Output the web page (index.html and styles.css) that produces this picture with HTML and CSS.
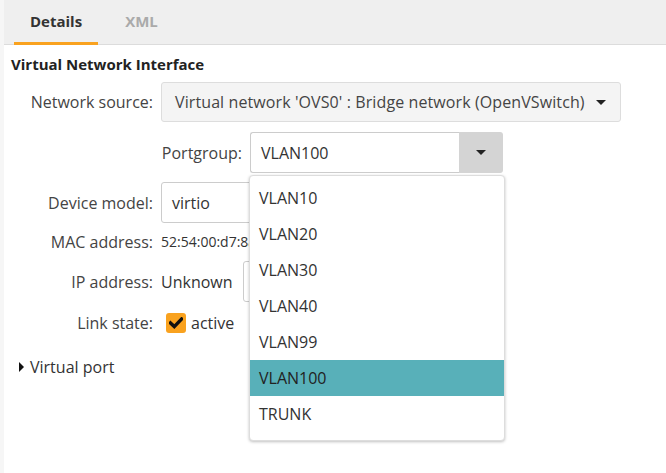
FILE: index.html
```html
<!DOCTYPE html>
<html>
<head>
<meta charset="utf-8">
<link rel="stylesheet" href="styles.css">
</head>
<body>
<div class="panel">
  <div class="tabs">
    <div class="tab active">Details</div>
    <div class="tab">XML</div>
  </div>
  <div class="content">
    <h2 class="title">Virtual Network Interface</h2>
    <div class="form">
      <div class="label">Network source:</div>
      <div class="value">
        <div class="select-btn">Virtual network 'OVS0' : Bridge network (OpenVSwitch) <span class="caret"></span></div>
      </div>
      <div class="value sub">
        <div class="sublabel">Portgroup:</div>
        <div class="combo">
          <div class="combo-input">VLAN100</div>
          <div class="combo-btn"><span class="caret"></span></div>
          <ul class="menu">
            <li>VLAN10</li>
            <li>VLAN20</li>
            <li>VLAN30</li>
            <li>VLAN40</li>
            <li>VLAN99</li>
            <li class="selected">VLAN100</li>
            <li>TRUNK</li>
          </ul>
        </div>
      </div>
      <div class="label">Device model:</div>
      <div class="value"><div class="input">virtio</div></div>
      <div class="label short">MAC address:</div>
      <div class="value short"><span class="small">52:54:00:d7:8a:5c</span></div>
      <div class="label">IP address:</div>
      <div class="value"><span class="plain">Unknown</span><div class="btn"></div></div>
      <div class="label short link">Link state:</div>
      <div class="value short link"><span class="check"><svg width="14" height="12" viewBox="0 0 14 12"><path d="M1.5 6 L5.3 9.6 L12.6 2" fill="none" stroke="#111" stroke-width="3.4" stroke-linecap="square"/></svg></span><span class="plain">active</span></div>
    </div>
    <div class="expander"><span class="tri"></span>Virtual port</div>
  </div>
</div>
</body>
</html>
```
FILE: styles.css
```css
html, body {
  margin: 0;
  padding: 0;
  height: 100%;
}
body {
  background: #f6f6f6;
  font-family: "Open Sans", "Noto Sans", sans-serif;
  font-size: 16px;
  line-height: 20px;
  color: #333;
  overflow: hidden;
}
.panel {
  margin-left: 4px;
  background: #fff;
  height: 100%;
}
.tabs {
  display: flex;
  height: 45px;
  background: #efefef;
  border-bottom: 1px solid #dcdcdc;
  padding-left: 10px;
  box-sizing: border-box;
}
.tab {
  padding: 0 16px;
  font-size: 15px;
  font-weight: bold;
  color: #aaa;
  display: flex;
  align-items: center;
  height: 42px;
  border-bottom: 3px solid transparent;
}
.tab + .tab {
  margin-left: 11px;
}
.tab.active {
  color: #333;
  border-bottom-color: #f9a21f;
}
.content {
  padding: 9px 7px;
}
.title {
  margin: 0;
  font-size: 15px;
  font-weight: bold;
  color: #222;
  line-height: 20px;
}
.form {
  display: grid;
  grid-template-columns: 142px 1fr;
  column-gap: 8px;
  row-gap: 9px;
  margin-top: 8px;
  align-items: center;
}
.label {
  text-align: right;
  color: #444;
}
.sub {
  grid-column: 2;
  display: flex;
  align-items: center;
  gap: 8px;
  margin-top: 1px;
}
.sub .sublabel {
  width: 81px;
  text-align: right;
  color: #444;
}
.select-btn {
  display: inline-flex;
  align-items: center;
  height: 40px;
  box-sizing: border-box;
  padding: 0 14px 0 13px;
  background: #f4f4f4;
  border: 1px solid #ddd;
  border-radius: 3px;
  color: #444;
  gap: 11px;
  letter-spacing: 0.1px;
}
.caret {
  display: inline-block;
  width: 0;
  height: 0;
  border-left: 5px solid transparent;
  border-right: 5px solid transparent;
  border-top: 5px solid #222;
}
.combo {
  position: relative;
  display: flex;
  height: 41px;
  width: 253px;
}
.combo-input {
  flex: 1;
  border: 1px solid #ccc;
  border-right: none;
  border-radius: 3px 0 0 3px;
  display: flex;
  align-items: center;
  padding-left: 10px;
  background: #fff;
}
.combo-btn {
  width: 44px;
  background: #d4d4d4;
  border-radius: 0 3px 3px 0;
  display: flex;
  align-items: center;
  justify-content: center;
}
.menu {
  position: absolute;
  top: 43px;
  left: -1px;
  width: 256px;
  margin: 0;
  padding: 4px 0 8px;
  list-style: none;
  background: #fff;
  border: 1px solid #ddd;
  border-radius: 4px;
  box-shadow: 0 1px 3px rgba(0,0,0,0.25);
  box-sizing: border-box;
  z-index: 2;
}
.menu li {
  height: 36px;
  line-height: 36px;
  padding-left: 9px;
  color: #333;
}
.menu li.selected {
  background: #58b0b9;
  color: #222;
}
.input {
  height: 41px;
  box-sizing: border-box;
  width: 200px;
  border: 1px solid #ccc;
  border-radius: 3px;
  display: flex;
  align-items: center;
  padding-left: 10px;
}
.short {
  height: 20px;
  line-height: 20px;
}
.link {
  margin-top: 2px;
}
.small {
  font-size: 14px;
}
.value {
  display: flex;
  align-items: center;
  gap: 8px;
}
.btn {
  width: 30px;
  height: 41px;
  border: 1px solid #ccc;
  border-radius: 3px;
  box-sizing: border-box;
  margin-left: 2px;
}
.check {
  width: 20px;
  height: 20px;
  flex: none;
  background: #f9a21f;
  border-radius: 3px;
  display: inline-flex;
  align-items: center;
  justify-content: center;
  margin-left: 5px;
  margin-right: -3px;
}
.expander {
  margin-top: 24px;
  margin-left: 8px;
  display: flex;
  align-items: center;
  gap: 6px;
  color: #333;
}
.tri {
  width: 0;
  height: 0;
  border-top: 5px solid transparent;
  border-bottom: 5px solid transparent;
  border-left: 5px solid #111;
}
```
